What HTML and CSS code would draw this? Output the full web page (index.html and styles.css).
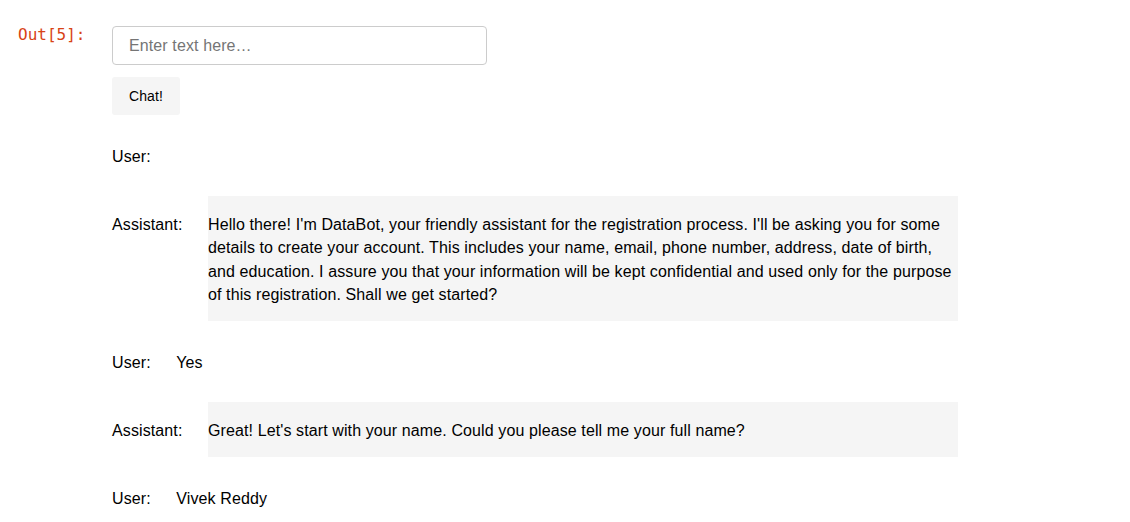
FILE: index.html
```html
<!DOCTYPE html>
<html>
<head>
<meta charset="utf-8">
<link rel="stylesheet" href="styles.css">
</head>
<body>
<div class="output">
  <div class="prompt">Out[5]:</div>
  <div class="content">
    <input class="text-input" type="text" placeholder="Enter text here…">
    <button class="chat-btn">Chat!</button>
    <div class="row">
      <div class="label">User:</div>
      <div class="msg user-msg"></div>
    </div>
    <div class="row">
      <div class="label">Assistant:</div>
      <div class="msg bot-msg">Hello there! I'm DataBot, your friendly assistant for the registration process. I'll be asking you for some details to create your account. This includes your name, email, phone number, address, date of birth, and education. I assure you that your information will be kept confidential and used only for the purpose of this registration. Shall we get started?</div>
    </div>
    <div class="row">
      <div class="label">User:</div>
      <div class="msg user-msg">Yes</div>
    </div>
    <div class="row">
      <div class="label">Assistant:</div>
      <div class="msg bot-msg">Great! Let's start with your name. Could you please tell me your full name?</div>
    </div>
    <div class="row">
      <div class="label">User:</div>
      <div class="msg user-msg">Vivek Reddy</div>
    </div>
  </div>
</div>
</body>
</html>
```

FILE: styles.css
```css
html, body {
  margin: 0;
  padding: 0;
  background: #ffffff;
}

body {
  font-family: "Liberation Sans", Arial, sans-serif;
  color: #000000;
  letter-spacing: 0.11px;
}

.output {
  display: flex;
  padding: 26px 0 0 18px;
}

.prompt {
  width: 94px;
  flex: none;
  font-family: "DejaVu Sans Mono", "Liberation Mono", monospace;
  font-size: 16px;
  line-height: 18px;
  letter-spacing: 0;
  color: #d84315;
}

.content {
  display: flex;
  flex-direction: column;
  align-items: flex-start;
}

.text-input {
  box-sizing: border-box;
  width: 375px;
  height: 39px;
  margin: 0;
  padding: 0 16px;
  border: 1px solid #cccccc;
  border-radius: 4px;
  font-family: "Liberation Sans", Arial, sans-serif;
  font-size: 16px;
  letter-spacing: 0.11px;
  color: #000;
  outline: none;
}

.text-input::placeholder {
  color: #757575;
  opacity: 1;
}

.chat-btn {
  box-sizing: border-box;
  margin-top: 12px;
  width: 68px;
  height: 38px;
  padding: 0;
  border: none;
  border-radius: 3px;
  background: #f5f5f5;
  font-family: "Liberation Sans", Arial, sans-serif;
  font-size: 14px;
  letter-spacing: 0.1px;
  color: #000;
}

.row {
  display: flex;
  align-items: flex-start;
  gap: 25.5px;
  margin-top: 13px;
  font-size: 16px;
  line-height: 23.2px;
}

.label {
  padding: 17px 0 15px;
  flex: none;
}

.msg {
  padding: 17px 0 15px;
}

.bot-msg {
  width: 750px;
  background: #f5f5f5;
}
```
